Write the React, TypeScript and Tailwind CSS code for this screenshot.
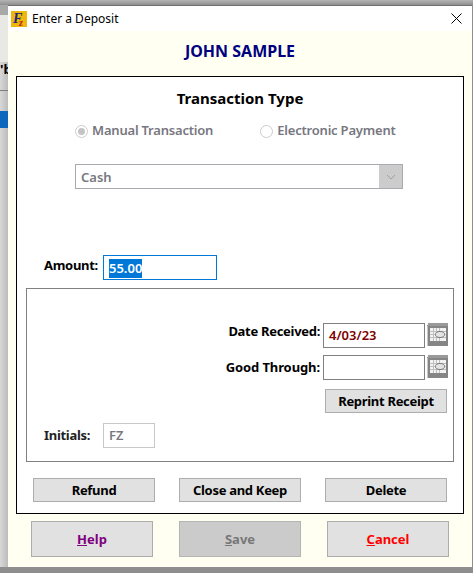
import React from 'react';

const FONT = "font-['Noto_Sans',sans-serif]";

const FlatButton = ({ label, className = '' }: { label: string; className?: string }) => (
  <button className={`w-[122px] h-[24px] bg-[#e1e1e1] border-[1.5px] border-[#adadad] text-[13px] tracking-[-0.3px] leading-none font-bold text-black ${className}`}>
    {label}
  </button>
);

const CalendarIcon = () => (
  <svg width="21" height="23" viewBox="0 0 21 23" className="shrink-0 self-start">
    <rect x="0" y="2" width="21" height="21" fill="#858585" />
    <rect x="1" y="0" width="20" height="3" fill="#9a9a9a" />
    <rect x="0" y="3" width="1" height="20" fill="#c8c8c8" />
    <rect x="3" y="5" width="16" height="13" fill="#f2f2f2" />
    <path d="M3 8.5h16M3 11.5h16M3 14.5h16M6.5 5v13M9.5 5v13M12.5 5v13" stroke="#c0c0c0" strokeWidth="1" />
    <ellipse cx="13" cy="11.5" rx="4.5" ry="3" fill="#e4e4e4" stroke="#7a7a7a" strokeWidth="1" />
  </svg>
);

const Radio = ({ checked }: { checked?: boolean }) => (
  <span className="w-[13px] h-[13px] rounded-full border border-[#cccccc] bg-white flex items-center justify-center shrink-0">
    {checked && <span className="w-[7px] h-[7px] rounded-full bg-[#c4c4c4]" />}
  </span>
);

const App = () => {
  return (
    <div className={`w-[473px] h-[573px] overflow-hidden flex flex-col bg-[#8e8e8e] ${FONT}`}>
      <div className="h-[5px] shrink-0 bg-gradient-to-b from-[#b4b4b4] to-[#8f8f8f]" />
      <div className="flex h-[562px] shrink-0">
        <div className="w-[8px] shrink-0 flex flex-col bg-gradient-to-r from-[#d8d8d8] to-[#bcbcbc]">
          <div className="h-[10px] bg-[#a8a8a8]" />
          <div className="h-[47px] bg-[#e8e8e4]" />
          <div className="h-[14px] text-[13px] leading-[14px] font-bold text-black overflow-hidden">'b</div>
          <div className="h-[14px]" />
          <div className="h-[1px] bg-[#808080]" />
          <div className="h-[20px]" />
          <div className="h-[17px] bg-[#0a69bd]" />
        </div>
        <div className="w-[464px] h-[562px] flex flex-col bg-[#fffff2] border-t border-t-[#707070]">
          <div className="h-[25px] shrink-0 bg-white flex items-center pl-[3px] pr-[10px]">
            <svg width="16" height="16" viewBox="0 0 16 16" className="shrink-0">
              <rect width="16" height="16" fill="#eeb70e" />
              <text x="2" y="12" fontFamily="Liberation Serif, serif" fontStyle="italic" fontWeight="bold" fontSize="14" fill="#1a2a78">F</text>
              <text x="8" y="15" fontFamily="Liberation Serif, serif" fontStyle="italic" fontWeight="bold" fontSize="10" fill="#c0201c">z</text>
            </svg>
            <span className="ml-[5px] text-[12px] leading-none text-black">Enter a Deposit</span>
            <svg width="11" height="11" viewBox="0 0 11 11" className="ml-auto">
              <path d="M0.5 0.5l10 10M10.5 0.5l-10 10" stroke="#000" strokeWidth="1" />
            </svg>
          </div>

          <div className="h-[45px] shrink-0 pb-[5px] flex items-center justify-center text-[16px] font-bold text-[#000080]">
            JOHN SAMPLE
          </div>

          <div className="ml-[8px] w-[448px] h-[438px] shrink-0 flex flex-col bg-white border border-black px-[9px]">
            <div className="mt-[10px] h-[22px] flex items-center justify-center text-[15px] font-bold text-black">
              Transaction Type
            </div>
            <div className="mt-[12px] h-[20px] flex items-center pl-[49px] text-[13px] tracking-[-0.2px] font-semibold text-[#777780]">
              <Radio checked />
              <span className="ml-[4px]">Manual Transaction</span>
              <span className="ml-[47px]"><Radio /></span>
              <span className="ml-[4px]">Electronic Payment</span>
            </div>
            <div className="mt-[23px] ml-[49px] w-[328px] h-[25px] flex items-center border border-[#a9a9b0] pl-[5px] text-[13px] font-semibold text-[#777780]">
              <span className="pt-[2px]">Cash</span>
              <span className="ml-auto w-[23px] h-full bg-[#cccccc] flex items-center justify-center">
                <svg width="10" height="6" viewBox="0 0 10 6">
                  <path d="M1 1l4 4 4-4" fill="none" stroke="#a0a0a0" strokeWidth="1" />
                </svg>
              </span>
            </div>

            <div className="mt-[66px] h-[25px] flex items-center pl-[18px]">
              <span className="w-[59px] mb-[4px] text-[13px] tracking-[-0.3px] font-bold text-black">Amount:</span>
              <div className="w-[114px] h-[25px] flex items-center border border-[#0078d7] pl-[5px] pt-[1px] text-[13px] font-semibold">
                <span className="bg-[#0078d7] text-white leading-[19px]">55.00</span>
              </div>
            </div>

            <div className="mt-[8px] w-[428px] h-[174px] flex flex-col border border-[#808080] pr-[5px]">
              <div className="mt-[34px] h-[25px] flex items-center justify-end gap-[2px]">
                <span className="mr-[1px] mb-[7px] text-[13px] tracking-[-0.3px] font-bold text-black">Date Received:</span>
                <div className="w-[102px] h-[25px] flex items-center border border-[#808080] pl-[5px] text-[13px] font-semibold text-[#800000]">
                  4/03/23
                </div>
                <CalendarIcon />
              </div>
              <div className="mt-[7px] h-[25px] flex items-center justify-end gap-[2px]">
                <span className="mr-[1px] text-[13px] tracking-[-0.1px] font-bold text-black">Good Through:</span>
                <div className="w-[102px] h-[25px] border border-[#808080]" />
                <CalendarIcon />
              </div>
              <div className="mt-[9px] flex justify-end pr-[1px]">
                <FlatButton label="Reprint Receipt" />
              </div>
              <div className="mt-[10px] h-[25px] flex items-center pl-[17px]">
                <span className="w-[59px] text-[13px] tracking-[-0.3px] font-bold text-[#222222]">Initials:</span>
                <div className="w-[52px] h-[25px] flex items-center border border-[#c8c8c8] pl-[5px] text-[13px] font-semibold text-[#777780]">
                  FZ
                </div>
              </div>
            </div>

            <div className="mt-[16px] flex pl-[7px] gap-[24px]">
              <FlatButton label="Refund" />
              <FlatButton label="Close and Keep" />
              <FlatButton label="Delete" />
            </div>
          </div>

          <div className="mt-[7px] ml-[23px] flex gap-[26px]">
            <button className="w-[122px] h-[36px] pt-[1px] bg-[#e1e1e1] border-[1.5px] border-[#adadad] text-[13px] font-bold text-[#800080]">
              <span className="underline">H</span>elp
            </button>
            <button className="w-[122px] h-[36px] pt-[1px] bg-[#cbcbcb] border-[1.5px] border-[#b4b4b4] text-[13px] font-bold text-[#777777]">
              <span className="underline">S</span>ave
            </button>
            <button className="w-[122px] h-[36px] pt-[1px] bg-[#e1e1e1] border-[1.5px] border-[#adadad] text-[13px] font-bold text-[#ff0000]">
              <span className="underline">C</span>ancel
            </button>
          </div>
        </div>
      </div>
    </div>
  );
};

export default App;
